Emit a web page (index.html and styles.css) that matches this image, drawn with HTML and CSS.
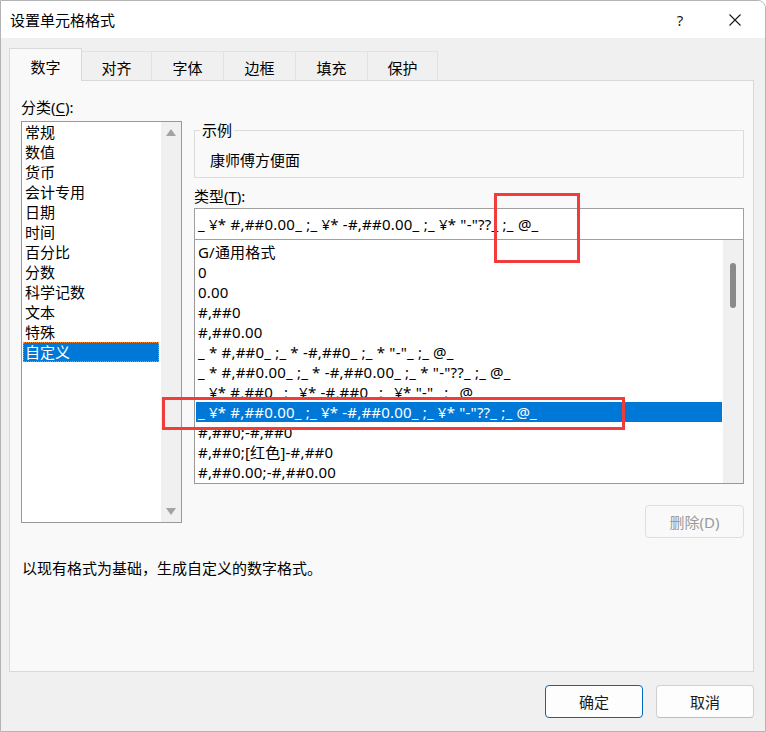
FILE: index.html
```html
<!DOCTYPE html>
<html lang="zh-CN">
<head>
<meta charset="utf-8">
<title>设置单元格格式</title>
<link rel="stylesheet" href="styles.css">
</head>
<body>
<div class="dialog">
  <div class="titlebar">
    <span class="title">设置单元格格式</span>
    <span class="cap-btn help">?</span>
    <span class="cap-btn close">
      <svg width="12" height="12" viewBox="0 0 12 12"><path d="M0.5 0.5 L11.5 11.5 M11.5 0.5 L0.5 11.5" stroke="#1a1a1a" stroke-width="1.1" fill="none"/></svg>
    </span>
  </div>
  <div class="body">
    <div class="tabs">
      <div class="tab active t73">数字</div>
      <div class="tab t70">对齐</div>
      <div class="tab t72">字体</div>
      <div class="tab t72">边框</div>
      <div class="tab t72">填充</div>
      <div class="tab t70">保护</div>
    </div>
    <div class="panel">
      <div class="cols">
        <div class="left">
          <div class="label">分类(<u>C</u>):</div>
          <div class="listbox catlist">
            <div class="items">
              <div class="row">常规</div>
              <div class="row">数值</div>
              <div class="row">货币</div>
              <div class="row">会计专用</div>
              <div class="row">日期</div>
              <div class="row">时间</div>
              <div class="row">百分比</div>
              <div class="row">分数</div>
              <div class="row">科学记数</div>
              <div class="row">文本</div>
              <div class="row">特殊</div>
              <div class="row sel focus">自定义</div>
            </div>
            <div class="vscroll arrows">
              <span class="arrow up"></span>
              <span class="arrow down"></span>
            </div>
          </div>
        </div>
        <div class="right">
          <fieldset class="sample">
            <legend>示例</legend>
            <div class="sample-text">康师傅方便面</div>
          </fieldset>
          <div class="label type-label">类型(<u>T</u>):</div>
          <div class="type-input">_ ¥* #,##0.00_ ;_ ¥* -#,##0.00_ ;_ ¥* "-"??_ ;_ @_</div>
          <div class="listbox typelist">
            <div class="items">
              <div class="row">G/通用格式</div>
              <div class="row">0</div>
              <div class="row">0.00</div>
              <div class="row">#,##0</div>
              <div class="row">#,##0.00</div>
              <div class="row">_ * #,##0_ ;_ * -#,##0_ ;_ * "-"_ ;_ @_</div>
              <div class="row">_ * #,##0.00_ ;_ * -#,##0.00_ ;_ * "-"??_ ;_ @_</div>
              <div class="row">_ ¥* #,##0_ ;_ ¥* -#,##0_ ;_ ¥* "-"_ ;_ @_</div>
              <div class="row sel">_ ¥* #,##0.00_ ;_ ¥* -#,##0.00_ ;_ ¥* "-"??_ ;_ @_</div>
              <div class="row">#,##0;-#,##0</div>
              <div class="row">#,##0;[红色]-#,##0</div>
              <div class="row">#,##0.00;-#,##0.00</div>
            </div>
            <div class="vscroll thin"><span class="thumb"></span></div>
          </div>
          <div class="del-row"><button class="btn disabled">删除(D)</button></div>
        </div>
      </div>
      <div class="desc">以现有格式为基础，生成自定义的数字格式。</div>
    </div>
    <div class="footer">
      <button class="btn default">确定</button>
      <button class="btn">取消</button>
    </div>
  </div>
  <div class="mark mark-a"></div>
  <div class="mark mark-b"></div>
</div>
</body>
</html>
```
FILE: styles.css
```css
* { box-sizing: border-box; }
html, body {
  margin: 0;
  padding: 0;
  background: #ffffff;
}
body {
  font-family: "Noto Sans", "Noto Sans CJK SC", sans-serif;
  font-size: 15px;
  line-height: 20px;
  color: #000;
}
.dialog {
  position: relative;
  width: 766px;
  height: 732px;
  border: 1px solid #b4b4b4;
  border-top-right-radius: 8px;
  background: #f0f0f0;
  overflow: hidden;
}
.titlebar {
  height: 37px;
  background: #ffffff;
  display: flex;
  align-items: center;
  padding-left: 9px;
}
.title {
  font-size: 15px;
  line-height: 20px;
}
.cap-btn {
  width: 46px;
  height: 37px;
  display: flex;
  align-items: center;
  justify-content: center;
}
.help {
  margin-left: auto;
  font-size: 15px;
  color: #1a1a1a;
}
.close {
  margin-left: 9px;
  margin-right: 7px;
}
.body {
  padding: 10px 11px 0 8px;
}
.tabs {
  display: flex;
  align-items: flex-end;
  height: 32px;
}
.tab {
  height: 29px;
  border-top: 1px solid #e2e2e2;
  border-right: 1px solid #e2e2e2;
  background: #f0f0f0;
  display: flex;
  align-items: center;
  justify-content: center;
  padding-top: 3px;
}
.tab.active {
  position: relative;
  z-index: 1;
  height: 33px;
  margin-bottom: -1px;
  border: 1px solid #d9d9d9;
  border-bottom: none;
  background: #f9f9f9;
  padding-top: 3px;
}
.t73 { width: 73px; }
.t72 { width: 72px; }
.t70 { width: 70px; }
.panel {
  height: 592px;
  border: 1px solid #d9d9d9;
  background: #f9f9f9;
  padding: 16px 9px 0 11px;
}
.cols {
  display: flex;
  align-items: flex-start;
}
.left {
  width: 161px;
}
.label u {
  text-decoration-thickness: 1px;
  text-underline-offset: 2px;
}
.listbox {
  border: 1px solid #999999;
  background: #ffffff;
  display: flex;
  overflow: hidden;
}
.catlist {
  margin-top: 4px;
  height: 402px;
}
.items {
  flex: 1;
  min-width: 0;
}
.catlist .items {
  padding: 0 2px 0 1px;
}
.row {
  height: 20px;
  line-height: 20px;
  padding-left: 2px;
  white-space: nowrap;
}
.typelist .row {
  letter-spacing: 0.2px;
}
.row.sel {
  background: #0078d7;
  color: #ffffff;
}
.row.focus {
  border: 1px dotted #ff8a2a;
  padding-left: 1px;
  line-height: 18px;
}
.vscroll {
  width: 20px;
  background: #f0f0f0;
}
.vscroll.arrows {
  display: flex;
  flex-direction: column;
  justify-content: space-between;
  align-items: center;
  padding: 7px 1px 7px 0;
}
.arrow {
  width: 0;
  height: 0;
  border-left: 5px solid transparent;
  border-right: 5px solid transparent;
}
.arrow.up { border-bottom: 7px solid #a3a3a3; }
.arrow.down { border-top: 7px solid #a3a3a3; }
.right {
  flex: 1;
  margin-left: 12px;
}
.sample {
  margin: 23px 0 0 0;
  padding: 0 15px 7px 15px;
  border: 1px solid #dcdcdc;
  min-width: 0;
}
.sample legend {
  margin-left: -10px;
  padding: 0 2px;
  line-height: 20px;
}
.sample-text {
  padding-top: 10px;
  line-height: 20px;
}
.type-label {
  margin-top: 8px;
}
.type-input {
  margin-top: 2px;
  height: 32px;
  border: 1px solid #a0a0a0;
  background: #ffffff;
  padding-left: 3px;
  line-height: 30px;
  white-space: nowrap;
  letter-spacing: 0.23px;
}
.typelist {
  height: 244px;
  border-top: none;
}
.typelist .items {
  padding: 2px 1px 0 1px;
}
.vscroll.thin {
  padding: 23px 0 0 7px;
}
.thumb {
  display: block;
  width: 6px;
  height: 45px;
  border-radius: 3px;
  background: #8a8a8a;
}
.del-row {
  display: flex;
  justify-content: flex-end;
  margin-top: 21px;
}
.btn {
  font-family: "Noto Sans", "Noto Sans CJK SC", sans-serif;
  font-size: 15px;
  line-height: 20px;
  height: 33px;
  width: 98px;
  border: 1px solid #d0d0d0;
  border-bottom-color: #bcbcbc;
  border-radius: 4px;
  background: #fdfdfd;
  color: #1a1a1a;
  padding: 0;
}
.btn.disabled {
  width: 99px;
  color: #9a9a9a;
  background: #f9f9f9;
  border-color: #dedede;
}
.btn.default {
  border: 1px solid #0067c0;
}
.desc {
  margin-top: 20px;
  padding-left: 1px;
}
.footer {
  display: flex;
  justify-content: flex-end;
  gap: 13px;
  padding-top: 13px;
}
.mark {
  position: absolute;
  border: 3px solid #f23c3c;
}
.mark-a {
  left: 493px;
  top: 192px;
  width: 86px;
  height: 70px;
}
.mark-b {
  left: 161px;
  top: 396px;
  width: 463px;
  height: 33px;
}
```
